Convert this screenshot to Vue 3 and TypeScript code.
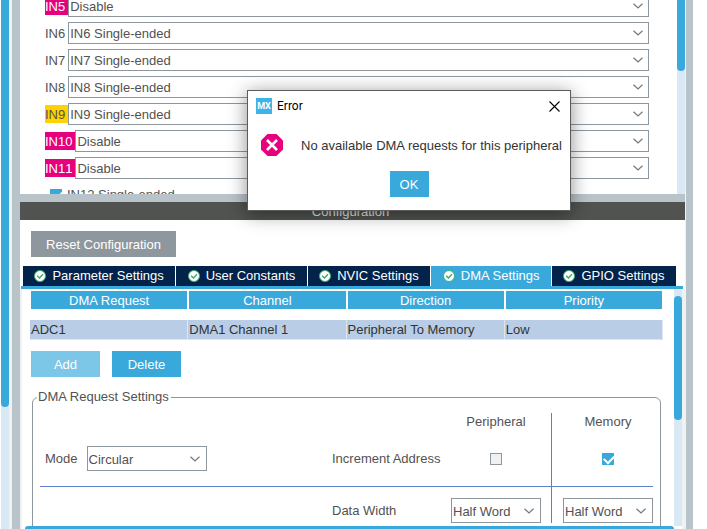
<script setup lang="ts">
import { ref } from 'vue'

interface Channel {
  name: string
  value: string
  state: 'error' | 'warn' | 'plain'
}

const channels = ref<Channel[]>([
  { name: 'IN5', value: 'Disable', state: 'error' },
  { name: 'IN6', value: 'IN6 Single-ended', state: 'plain' },
  { name: 'IN7', value: 'IN7 Single-ended', state: 'plain' },
  { name: 'IN8', value: 'IN8 Single-ended', state: 'plain' },
  { name: 'IN9', value: 'IN9 Single-ended', state: 'warn' },
  { name: 'IN10', value: 'Disable', state: 'error' },
  { name: 'IN11', value: 'Disable', state: 'error' },
])

const tabs = ['Parameter Settings', 'User Constants', 'NVIC Settings', 'DMA Settings', 'GPIO Settings']
const activeTab = ref('DMA Settings')

const columns = ['DMA Request', 'Channel', 'Direction', 'Priority']
const requests = [['ADC1', 'DMA1 Channel 1', 'Peripheral To Memory', 'Low']]

const in12 = ref(true)
const mode = ref('Circular')
const incPeripheral = ref(false)
const incMemory = ref(true)
const widthPeripheral = ref('Half Word')
const widthMemory = ref('Half Word')
const dialogOpen = ref(true)
</script>

<template>
  <div class="window">
    <div class="outer-scroll"><div class="outer-thumb"></div></div>
    <div class="edge"></div>

    <main class="content">
      <section class="mode-pane">
        <div class="channels">
          <div v-for="c in channels" :key="c.name" class="channel">
            <label :for="c.name" :class="['tag', c.state]">{{ c.name }}</label>
            <span class="combo">
              <select :id="c.name" v-model="c.value">
                <option>{{ c.value }}</option>
              </select>
              <svg class="chevron" viewBox="0 0 10 6"><path d="M0.5 0.8 5 5 9.5 0.8" /></svg>
            </span>
          </div>
          <label class="check-row">
            <input v-model="in12" type="checkbox" class="box" />
            <span>IN12 Single-ended</span>
          </label>
        </div>
        <div class="pane-scroll"><div class="pane-thumb mode-thumb"></div></div>
      </section>

      <div class="splitter"></div>
      <h2 class="heading">Configuration</h2>

      <section class="config-pane">
        <div class="toolbar">
          <button type="button" class="btn reset">Reset Configuration</button>
        </div>

        <div class="tabs" role="tablist">
          <button
            v-for="t in tabs"
            :key="t"
            type="button"
            role="tab"
            :aria-selected="t === activeTab"
            :class="['tab', { active: t === activeTab }]"
            @click="activeTab = t"
          >
            <svg class="tick" viewBox="0 0 12 12">
              <circle cx="6" cy="6" r="5.5" fill="#fff" stroke="#3fae6c" />
              <path d="M3.2 5.8 5.4 8 9 4.2" fill="none" stroke="#35a765" stroke-width="1.3" />
            </svg>
            <span>{{ t }}</span>
          </button>
        </div>

        <div class="tab-body">
          <div class="tab-main">
            <div class="scroll-content">
              <table class="requests">
                <thead>
                  <tr><th v-for="c in columns" :key="c" scope="col">{{ c }}</th></tr>
                </thead>
                <tbody>
                  <tr v-for="r in requests" :key="r[0]">
                    <td v-for="cell in r" :key="cell">{{ cell }}</td>
                  </tr>
                </tbody>
              </table>

              <div class="actions">
                <button type="button" class="btn action" disabled>Add</button>
                <button type="button" class="btn action">Delete</button>
              </div>

              <fieldset class="settings">
                <legend>DMA Request Settings</legend>
                <div class="grid">
                  <div class="cell"></div>
                  <div class="cell"></div>
                  <div class="cell mid">Peripheral</div>
                  <div class="cell mem">Memory</div>

                  <div class="cell line mode">
                    <label for="mode">Mode</label>
                    <span class="combo tall mode-combo">
                      <select id="mode" v-model="mode">
                        <option>Circular</option>
                        <option>Normal</option>
                      </select>
                      <svg class="chevron" viewBox="0 0 10 6"><path d="M0.5 0.8 5 5 9.5 0.8" /></svg>
                    </span>
                  </div>
                  <div class="cell line">Increment Address</div>
                  <div class="cell line mid">
                    <input v-model="incPeripheral" type="checkbox" class="box" aria-label="Increment Address Peripheral" />
                  </div>
                  <div class="cell line mem">
                    <input v-model="incMemory" type="checkbox" class="box" aria-label="Increment Address Memory" />
                  </div>

                  <div class="cell last"></div>
                  <div class="cell last">Data Width</div>
                  <div class="cell last mid">
                    <span class="combo tall">
                      <select v-model="widthPeripheral" aria-label="Data Width Peripheral">
                        <option>Half Word</option>
                      </select>
                      <svg class="chevron" viewBox="0 0 10 6"><path d="M0.5 0.8 5 5 9.5 0.8" /></svg>
                    </span>
                  </div>
                  <div class="cell last mem">
                    <span class="combo tall">
                      <select v-model="widthMemory" aria-label="Data Width Memory">
                        <option>Half Word</option>
                      </select>
                      <svg class="chevron" viewBox="0 0 10 6"><path d="M0.5 0.8 5 5 9.5 0.8" /></svg>
                    </span>
                  </div>
                </div>
              </fieldset>
            </div>
            <div class="h-scroll"></div>
          </div>
          <div class="pane-scroll config-scroll"><div class="pane-thumb config-thumb"></div></div>
        </div>
      </section>
    </main>

    <div class="right-edge"></div>

    <div v-if="dialogOpen" class="dialog" role="alertdialog" aria-labelledby="dialog-title">
      <header class="titlebar">
        <span class="logo">MX</span>
        <span id="dialog-title" class="title">Error</span>
        <button type="button" class="close" aria-label="Close" @click="dialogOpen = false">
          <svg viewBox="0 0 11 11"><path d="M0.5 0.5 10.5 10.5M10.5 0.5 0.5 10.5" /></svg>
        </button>
      </header>
      <div class="message">
        <svg class="stop" viewBox="0 0 22 22">
          <path d="M6.5 0h9L22 6.5v9L15.5 22h-9L0 15.5v-9z" fill="#e6007e" />
          <path d="M6 6 16 16M16 6 6 16" stroke="#fff" stroke-width="2.6" />
        </svg>
        <span>No available DMA requests for this peripheral</span>
      </div>
      <button type="button" class="btn confirm" @click="dialogOpen = false">OK</button>
    </div>
  </div>
</template>

<style>
body {
  margin: 0;
  background: #fff;
}
</style>

<style scoped>
* {
  box-sizing: border-box;
}
.window {
  position: relative;
  display: flex;
  height: 100vh;
  overflow: hidden;
  background: #fff;
  color: #525252;
  font: 13px/18px 'Liberation Sans', Arial, sans-serif;
}
button,
select {
  font: inherit;
  color: inherit;
  border-radius: 0;
}

/* window frame */
.outer-scroll {
  flex: none;
  width: 8px;
  margin-left: 1px;
  background: #d9e8f5;
}
.outer-thumb {
  height: 77%;
  background: #39a9dc;
  border-radius: 0 0 4px 4px;
}
.edge {
  flex: none;
  width: 11px;
  border-left: 3px solid #eff1f3;
  background: #b9c4ca;
}
.right-edge {
  flex: none;
  width: 8px;
  margin-right: 14px;
  border-left: 1px solid #eff1f3;
  background: #b9c4ca;
}
.content {
  flex: 1;
  min-width: 0;
  display: flex;
  flex-direction: column;
}

/* upper pane */
.mode-pane {
  flex: none;
  display: flex;
  height: 194px;
  overflow: hidden;
}
.channels {
  flex: 1;
  min-width: 0;
  display: flex;
  flex-direction: column;
  gap: 5px;
  margin-top: -5px;
  padding: 0 28px 0 25px;
}
.channel {
  flex: none;
  display: flex;
  align-items: center;
}
.tag {
  flex: none;
  padding: 1px 3px 0 0;
  line-height: 17px;
  font-kerning: none;
}
.tag.error {
  background: #e6007e;
  color: #fff;
}
.tag.warn {
  background: #ffd200;
}
.combo {
  position: relative;
  flex: 1;
  display: flex;
  height: 22px;
}
.combo.tall {
  height: 25px;
}
.combo select {
  appearance: none;
  width: 100%;
  margin: 0;
  padding: 2px 24px 0 1px;
  border: 1px solid #8f979e;
  background: transparent;
}
.chevron {
  position: absolute;
  right: 6px;
  top: 50%;
  width: 10px;
  height: 6px;
  margin-top: -3px;
  fill: none;
  stroke: #777;
  stroke-width: 1.2;
  pointer-events: none;
}
.tall .chevron {
  right: 7px;
}
.check-row {
  flex: none;
  display: flex;
  align-items: center;
  gap: 5px;
  height: 22px;
  padding-left: 5px;
}
.box {
  appearance: none;
  flex: none;
  width: 12px;
  height: 12px;
  margin: 0;
  border: 1px solid #8f979e;
  background: #f0f1f3;
}
.box:checked {
  border-color: #39a9dc;
  background: #39a9dc;
}
.box:checked::before {
  content: '';
  display: block;
  width: 8px;
  height: 5px;
  margin: 1px 0 0 1px;
  border: solid #fff;
  border-width: 0 0 2px 2px;
  transform: rotate(-45deg);
}
.pane-scroll {
  flex: none;
  width: 8px;
  background: #d9e8f5;
}
.pane-thumb {
  background: #39a9dc;
}
.mode-thumb {
  height: 71px;
  border-radius: 0 0 4px 4px;
}

.splitter {
  flex: none;
  height: 8px;
  background: #b9c4ca;
}
.heading {
  flex: none;
  margin: 0;
  padding: 2px 4px 0 0;
  background: #50534f;
  color: #e4e6e6;
  font-size: 13px;
  font-weight: 400;
  line-height: 16px;
  text-align: center;
}

/* lower pane */
.config-pane {
  flex: 1;
  min-height: 0;
  display: flex;
  flex-direction: column;
}
.toolbar {
  flex: none;
  display: flex;
  padding: 11px 11px 9px;
}
.btn {
  height: 26px;
  padding: 2px 12px 0;
  border: 0;
  background: #39a9dc;
  color: #fff;
  white-space: nowrap;
}
.btn.reset {
  background: #8f979e;
  width: 145px;
}
.btn:disabled {
  background: #7cc6e8;
}
.tabs {
  flex: none;
  display: flex;
  gap: 1px;
  margin: 0 2px 0 1px;
  padding: 0 7px 0 2px;
  border-bottom: 3px solid #39a9dc;
}
.tab {
  flex: 1 1 auto;
  display: flex;
  align-items: center;
  justify-content: center;
  gap: 6px;
  height: 20px;
  padding: 0;
  border: 0;
  background: #03234b;
  color: #fff;
  white-space: nowrap;
}
.tab.active {
  background: #39a9dc;
}
.tick {
  flex: none;
  width: 12px;
  height: 12px;
}
.tab-body {
  flex: 1;
  min-height: 0;
  display: flex;
  border: solid #eff1f3;
  border-width: 0 3px 0 2px;
}
.tab-main {
  flex: 1;
  min-width: 0;
  display: flex;
  flex-direction: column;
}
.scroll-content {
  flex: 1;
  min-height: 0;
  overflow: hidden;
  padding: 2px 11px 0 8px;
}
.h-scroll {
  flex: none;
  height: 3px;
  margin-left: 3px;
  background: #39a9dc;
  border-radius: 3px 3px 0 0;
}
.config-scroll {
  padding-top: 7px;
  margin-bottom: 3px;
}
.config-thumb {
  height: 54%;
  border-radius: 4px;
}

.requests {
  width: 100%;
  table-layout: fixed;
  border-collapse: separate;
  border-spacing: 0;
}
.requests th {
  height: 18px;
  padding: 2px 0 0;
  border: solid #fff;
  border-width: 0 1px;
  background: #39a9dc;
  color: #fff;
  font-weight: 400;
  line-height: 16px;
}
.requests tbody::before {
  content: '';
  display: block;
  height: 11px;
}
.requests td {
  height: 20px;
  padding: 0 1px;
  border: solid #dfe5ec;
  border-width: 0 1px 1px 0;
  background: #b9cee6;
  color: #333;
}
.actions {
  display: flex;
  gap: 12px;
  padding: 11px 1px;
}
.action {
  width: 69px;
}
.settings {
  min-width: 0;
  margin: 0 2px;
  padding: 7px 7px 40px;
  border: 1px solid #8f979e;
  border-radius: 6px;
}
.settings legend {
  margin-left: -3px;
  padding: 0 2px 0 1px;
}
.grid {
  display: grid;
  grid-template-columns: 1fr 109px 110px 102px;
  grid-template-rows: 18px 56px 36px;
}
.cell {
  display: flex;
  align-items: center;
  white-space: nowrap;
}
.line {
  border-bottom: 1px solid #5b7fc8;
}
.last {
  padding-top: 11px;
}
.mid {
  justify-content: center;
  padding-left: 10px;
  padding-right: 10px;
}
.mem {
  justify-content: center;
  padding-left: 11px;
  border-left: 1px solid #5b7fc8;
}
.mode {
  gap: 9px;
  padding-left: 5px;
}
.mode-combo {
  flex: none;
  width: 120px;
}

/* error dialog */
.dialog {
  position: absolute;
  left: 247px;
  top: 90px;
  display: flex;
  flex-direction: column;
  width: 324px;
  padding-bottom: 13px;
  border: 1px solid #5c5c5c;
  background: #fff;
  color: #333;
  box-shadow: 0 3px 18px rgba(0, 0, 0, 0.45);
}
.titlebar {
  display: flex;
  align-items: center;
  gap: 5px;
  padding: 6px 10px 0 8px;
}
.logo {
  width: 16px;
  height: 16px;
  background: #3cb4e7;
  color: #fff;
  font: bold 9px/16px Roboto, sans-serif;
  text-align: center;
}
.title {
  flex: 1;
  padding-top: 1px;
  color: #000;
  font: 12px/17px Roboto, 'Noto Sans', sans-serif;
}
.close {
  display: flex;
  padding: 0;
  border: 0;
  background: none;
}
.close svg {
  width: 11px;
  height: 11px;
  stroke: #000;
  stroke-width: 1.1;
}
.message {
  display: flex;
  align-items: center;
  gap: 18px;
  padding: 19px 0 15px 13px;
  white-space: nowrap;
}
.message span {
  padding-top: 2px;
}
.stop {
  flex: none;
  width: 22px;
  height: 22px;
}
.confirm {
  align-self: center;
  width: 39px;
  padding: 2px 0 0;
}
</style>
